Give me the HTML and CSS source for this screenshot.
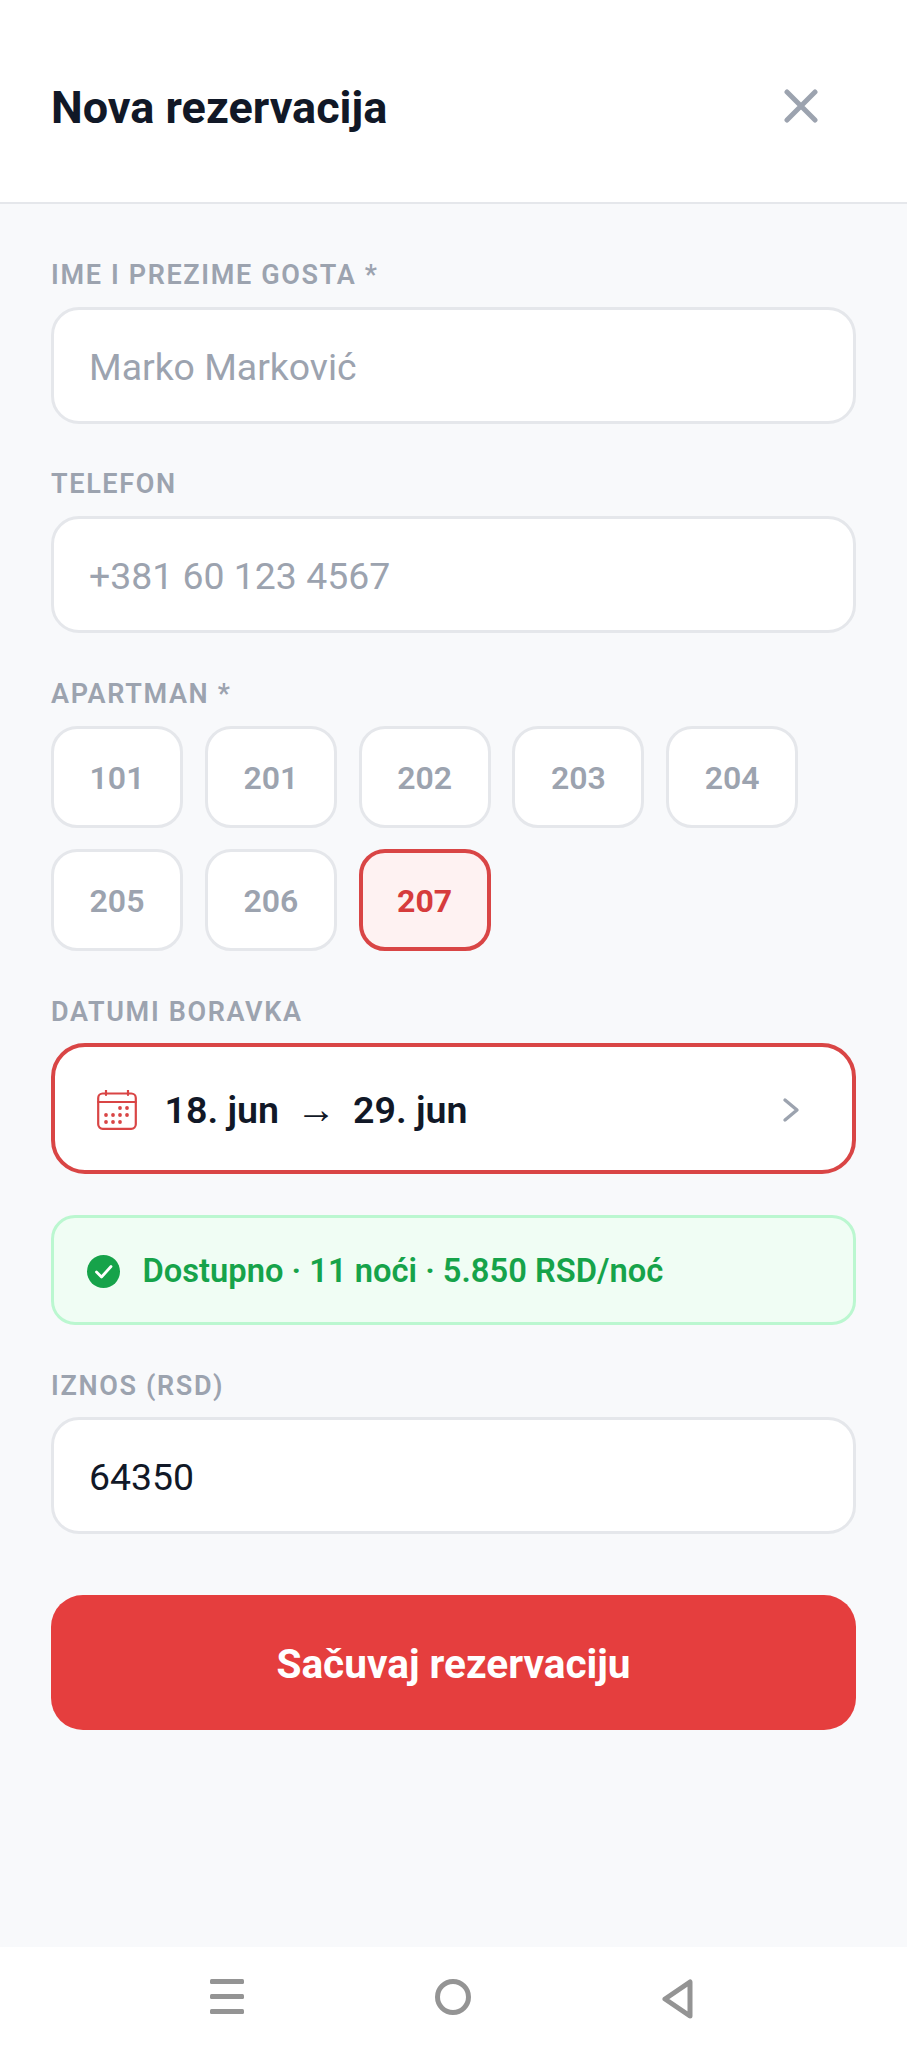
FILE: index.html
```html
<!DOCTYPE html>
<html lang="en">
<head>
  <meta charset="UTF-8" />
  <meta name="viewport" content="width=device-width, initial-scale=1.0" />
  <title>Nova rezervacija</title>
  <link rel="stylesheet" href="styles.css">
</head>
<body>
  <div class="page">

    <!-- Header -->
    <header class="header">
      <h1>Nova rezervacija</h1>
      <button class="close-btn" aria-label="Zatvori">
        <svg width="34" height="34" viewBox="0 0 34 34" fill="none" stroke="#9ca3af" stroke-width="5" stroke-linecap="round">
          <path d="M3 3 L31 31 M31 3 L3 31" />
        </svg>
      </button>
    </header>

    <!-- Form -->
    <form class="form">
      <label class="field-label">IME I PREZIME GOSTA *</label>
      <input class="text-input" type="text" placeholder="Marko Marković">

      <label class="field-label">TELEFON</label>
      <input class="text-input" type="text" placeholder="+381 60 123 4567">

      <label class="field-label label-apartment">APARTMAN *</label>
      <div class="chips">
        <button type="button" class="chip">101</button>
        <button type="button" class="chip">201</button>
        <button type="button" class="chip">202</button>
        <button type="button" class="chip">203</button>
        <button type="button" class="chip">204</button>
        <button type="button" class="chip">205</button>
        <button type="button" class="chip">206</button>
        <button type="button" class="chip active">207</button>
      </div>

      <label class="field-label label-dates">DATUMI BORAVKA</label>
      <button type="button" class="date-box">
        <svg class="cal-icon" width="40" height="40" viewBox="0 0 40 40" fill="none" stroke="#d94545" stroke-width="2.2">
          <rect x="1.2" y="3.5" width="37.6" height="35.3" rx="4.5" />
          <path d="M1.2 12 H38.8 M9 0.5 V5 M31 0.5 V5" stroke-linecap="round" />
          <g fill="#d94545" stroke="none">
            <circle cx="23" cy="18" r="1.9" /><circle cx="30" cy="18" r="1.9" />
            <circle cx="9" cy="25" r="1.9" /><circle cx="16" cy="25" r="1.9" /><circle cx="23" cy="25" r="1.9" /><circle cx="30" cy="25" r="1.9" />
            <circle cx="9" cy="32" r="1.9" /><circle cx="16" cy="32" r="1.9" /><circle cx="23" cy="32" r="1.9" />
          </g>
        </svg>
        <span class="date-text">18. jun</span>
        <span class="date-arrow">→</span>
        <span class="date-text">29. jun</span>
        <svg class="chevron" width="18" height="26" viewBox="0 0 18 26" fill="none" stroke="#9ca3af" stroke-width="3.4" stroke-linecap="round" stroke-linejoin="round">
          <path d="M3 3 L15 13 L3 23" />
        </svg>
      </button>

      <div class="avail">
        <svg width="33" height="33" viewBox="0 0 33 33">
          <circle cx="16.5" cy="16.5" r="16.5" fill="#16a34a" />
          <path d="M9.5 17 L14.5 22 L24 11.5" fill="none" stroke="#fff" stroke-width="2.8" stroke-linecap="round" stroke-linejoin="round" />
        </svg>
        <span>Dostupno · 11 noći · 5.850 RSD/noć</span>
      </div>

      <label class="field-label label-amount">IZNOS (RSD)</label>
      <input class="text-input" type="text" value="64350">

      <button type="button" class="save-btn">Sačuvaj rezervaciju</button>
    </form>

    <!-- Android nav bar -->
    <nav class="nav-bar">
      <svg width="34" height="36" viewBox="0 0 34 36" fill="#949494">
        <rect x="0" y="0" width="34" height="5" rx="1.5" />
        <rect x="0" y="15" width="34" height="5" rx="1.5" />
        <rect x="0" y="30" width="34" height="5" rx="1.5" />
      </svg>
      <svg width="36" height="36" viewBox="0 0 36 36" fill="none" stroke="#949494" stroke-width="5">
        <circle cx="18" cy="18" r="15.5" />
      </svg>
      <svg width="32" height="40" viewBox="0 0 32 40" fill="none" stroke="#949494" stroke-width="5" stroke-linejoin="round">
        <path d="M28 3 V37 L3 20 Z" />
      </svg>
    </nav>
  </div>
</body>
</html>
```

FILE: styles.css
```css
* {
  box-sizing: border-box;
}

body {
  margin: 0;
  font-family: Roboto, sans-serif;
  background: #f8f9fb;
  color: #111827;
}

.page {
  min-height: 2048px;
  display: flex;
  flex-direction: column;
}

.header {
  height: 204px;
  padding: 0 51px;
  background: #fff;
  border-bottom: 2px solid #e5e7eb;
  display: flex;
  align-items: center;
  justify-content: space-between;
}

.header h1 {
  margin: 12px 0 0;
  font-size: 45px;
  font-weight: 700;
  color: #111827;
}

.close-btn {
  margin: 10px 38px 0 0;
  padding: 0;
  display: flex;
  background: none;
  border: none;
  cursor: pointer;
}

.form {
  padding: 56px 51px 0;
  display: flex;
  flex-direction: column;
}

.field-label {
  display: block;
  height: 30px;
  line-height: 30px;
  margin-bottom: 17px;
  font-size: 27px;
  font-weight: 600;
  letter-spacing: 1.65px;
  color: #9ca3af;
}

.text-input {
  width: 100%;
  height: 117px;
  padding: 3px 35px 0;
  margin-bottom: 45px;
  background: #fff;
  border: 3px solid #e5e7eb;
  border-radius: 28px;
  font-family: Roboto, sans-serif;
  font-size: 37.4px;
  color: #111827;
  outline: none;
}

.text-input::placeholder {
  color: #9ca3af;
  opacity: 1;
}

.label-apartment {
  margin-top: 1px;
}

.chips {
  display: flex;
  flex-wrap: wrap;
  gap: 20.5px 21.8px;
}

.chip {
  width: 132px;
  height: 102px;
  padding-top: 3px;
  background: #fff;
  border: 3.5px solid #e5e7eb;
  border-radius: 26px;
  font-family: Roboto, sans-serif;
  font-size: 32px;
  font-weight: 600;
  color: #9ca3af;
  cursor: pointer;
}

.chip.active {
  background: #fef2f2;
  border: 4px solid #d94545;
  color: #d63c3c;
  font-weight: 700;
}

.label-dates {
  margin-top: 46px;
  margin-bottom: 16.5px;
}

.date-box {
  height: 131px;
  padding: 2px 52px 0 42px;
  background: #fff;
  border: 4px solid #d94545;
  border-radius: 34px;
  display: flex;
  align-items: center;
  font-family: Roboto, sans-serif;
  color: #111827;
  cursor: pointer;
}

.cal-icon {
  margin-right: 27.5px;
}

.date-text {
  font-size: 37.6px;
  font-weight: 600;
}

.date-arrow {
  margin: 0 17px;
  font-size: 40px;
  line-height: 1;
}

.chevron {
  margin-left: auto;
}

.avail {
  height: 110px;
  margin: 41px 0 46px;
  padding: 2px 33px 0;
  background: #f0fdf4;
  border: 3px solid #bbf7d0;
  border-radius: 24px;
  display: flex;
  align-items: center;
  gap: 22.5px;
  font-size: 32.7px;
  font-weight: 600;
  color: #16a34a;
}

.label-amount {
  margin-bottom: 16px;
}

.save-btn {
  height: 135px;
  margin-top: 16px;
  padding-top: 4px;
  background: #e53e3e;
  border: none;
  border-radius: 32px;
  font-family: Roboto, sans-serif;
  font-size: 40.6px;
  font-weight: 700;
  color: #fff;
  cursor: pointer;
}

.nav-bar {
  margin-top: auto;
  height: 101px;
  padding: 32px 213px 0 210px;
  background: #fff;
  display: flex;
  align-items: flex-start;
  justify-content: space-between;
}
```
